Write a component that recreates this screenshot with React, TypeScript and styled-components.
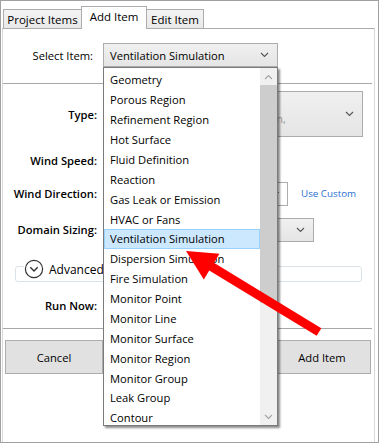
import styled, { createGlobalStyle } from "styled-components";

const GlobalStyle = createGlobalStyle`
  html, body { margin: 0; padding: 0; background: #fff; }
  body { font-family: "Open Sans", "Noto Sans", Arial, sans-serif; }
`;

const Frame = styled.div`
  position: relative;
  width: 379px;
  height: 443px;
  box-sizing: border-box;
  border: 1px solid #a0a0a0;
  background: #fff;
  display: flex;
  flex-direction: column;
  overflow: hidden;
  font-size: 11.2px;
  color: #000;
`;

const TabStrip = styled.div`
  display: flex;
  align-items: flex-end;
  height: 27px;
  padding-left: 2px;
  position: relative;
  z-index: 2;
`;

const Tab = styled.div<{ $active?: boolean; $w: number }>`
  box-sizing: border-box;
  width: ${(p) => p.$w}px;
  height: ${(p) => (p.$active ? 23 : 19)}px;
  margin-bottom: ${(p) => (p.$active ? -1 : 0)}px;
  border: 1px solid #acacac;
  border-bottom: none;
  margin-right: -1px;
  background: ${(p) => (p.$active ? "#fff" : "linear-gradient(#f3f3f3, #e9e9e9)")};
  display: flex;
  align-items: center;
  justify-content: center;
  font-size: 11.5px;
  padding-bottom: ${(p) => (p.$active ? 3 : 0)}px;
  position: relative;
  z-index: ${(p) => (p.$active ? 2 : 1)};
`;

const Panel = styled.div`
  flex: 1;
  margin-left: 1px;
  width: 373px;
  box-sizing: border-box;
  border: 1px solid #d9d9d9;
  border-top-color: #acacac;
  border-bottom: none;
  display: flex;
  flex-direction: column;
`;

const Row = styled.div<{ $h: number; $mt: number }>`
  display: flex;
  align-items: center;
  height: ${(p) => p.$h}px;
  margin-top: ${(p) => p.$mt}px;
`;

const Label = styled.div<{ $bold?: boolean }>`
  width: 94px;
  box-sizing: border-box;
  text-align: right;
  padding-right: ${(p) => (p.$bold ? 0 : 4)}px;
  font-weight: ${(p) => (p.$bold ? 600 : 400)};
  margin-right: 6px;
  white-space: nowrap;
`;

const Combo = styled.div<{ $w: number; $h?: number; $plain?: boolean }>`
  box-sizing: border-box;
  width: ${(p) => p.$w}px;
  height: ${(p) => p.$h ?? 24}px;
  border: 1px solid #acacac;
  background: ${(p) => (p.$plain ? "#fff" : "linear-gradient(#f0f0f0, #e5e5e5)")};
  display: flex;
  align-items: center;
  justify-content: space-between;
  padding: 0 8px 0 6px;
`;

const Hint = styled.span`
  width: 176px;
  text-align: right;
  color: #9a9a9a;
  margin-top: 8px;
`;

const LinkText = styled.span`
  color: #2c6fd1;
  font-size: 9.8px;
  margin-left: 13px;
`;

const Separator = styled.div<{ $mt: number }>`
  height: 1px;
  background: #a7a7a7;
  margin: ${(p) => p.$mt}px 2px 0 0;
`;

const Expander = styled.div`
  box-sizing: border-box;
  height: 16px;
  margin: 24px 12px 0 12px;
  border: 1px solid #dce3e8;
  border-radius: 3px;
`;

const ExpanderHeader = styled.div`
  display: inline-flex;
  align-items: center;
  gap: 5px;
  margin: -12px 0 0 8px;
  padding-right: 4px;
  background: #fff;
  font-size: 12px;
`;

const ButtonRow = styled.div`
  display: flex;
  justify-content: space-between;
  margin-top: 11px;
  padding: 0 3px 0 2px;
`;

const Button = styled.div`
  box-sizing: border-box;
  width: 98px;
  height: 34px;
  border: 1px solid #adadad;
  background: #e1e1e1;
  display: flex;
  align-items: center;
  justify-content: center;
`;

const DropList = styled.div`
  position: absolute;
  left: 102px;
  top: 66px;
  width: 175px;
  height: 359px;
  box-sizing: border-box;
  border: 1px solid #7a7a7a;
  background: #fff;
  box-shadow: 2px 2px 2px rgba(0, 0, 0, 0.45);
  display: flex;
  z-index: 5;
`;

const Items = styled.div`
  flex: 1;
  padding: 2px 0 0 0;
  overflow: hidden;
`;

const Item = styled.div<{ $selected?: boolean }>`
  box-sizing: border-box;
  height: 19.88px;
  display: flex;
  align-items: center;
  padding-left: 5px;
  border: 1px solid ${(p) => (p.$selected ? "#99d1ff" : "transparent")};
  background: ${(p) => (p.$selected ? "#cce8ff" : "transparent")};
  white-space: nowrap;
`;

const ScrollBar = styled.div`
  width: 17px;
  background: #f0f0f0;
  display: flex;
  flex-direction: column;
`;

const ScrollButton = styled.div`
  height: 17px;
  display: flex;
  align-items: center;
  justify-content: center;
`;

const Thumb = styled.div`
  height: 218px;
  background: #cdcdcd;
`;

const Spacer = styled.div`
  flex: 1;
`;

const Overlay = styled.svg`
  position: absolute;
  left: 0;
  top: 0;
  z-index: 10;
  pointer-events: none;
`;

const Chevron = ({ up, color = "#333" }: { up?: boolean; color?: string }) => (
  <svg width="9" height="6" viewBox="0 0 9 6">
    <polyline
      points={up ? "1,5 4.5,1.5 8,5" : "1,1 4.5,4.5 8,1"}
      fill="none"
      stroke={color}
      strokeWidth="1.1"
    />
  </svg>
);

const items = [
  "Geometry",
  "Porous Region",
  "Refinement Region",
  "Hot Surface",
  "Fluid Definition",
  "Reaction",
  "Gas Leak or Emission",
  "HVAC or Fans",
  "Ventilation Simulation",
  "Dispersion Simulation",
  "Fire Simulation",
  "Monitor Point",
  "Monitor Line",
  "Monitor Surface",
  "Monitor Region",
  "Monitor Group",
  "Leak Group",
  "Contour",
];

// red annotation arrow
const tip = { x: 185, y: 250 };
const tail = { x: 318, y: 331 };
const dx = tip.x - tail.x;
const dy = tip.y - tail.y;
const len = Math.hypot(dx, dy);
const ux = dx / len;
const uy = dy / len;
const headLen = 30;
const headHalf = 15;
const bx = tip.x - ux * headLen;
const by = tip.y - uy * headLen;
const headPts = `${tip.x},${tip.y} ${bx - uy * headHalf},${by + ux * headHalf} ${bx + uy * headHalf},${by - ux * headHalf}`;

export default function App() {
  return (
    <>
      <GlobalStyle />
      <Frame>
        <TabStrip>
          <Tab $w={79}>Project Items</Tab>
          <Tab $w={66} $active>Add Item</Tab>
          <Tab $w={58}>Edit Item</Tab>
        </TabStrip>
        <Panel>
          <Row $h={24} $mt={14}>
            <Label>Select Item:</Label>
            <Combo $w={175}>
              <span>Ventilation Simulation</span>
              <Chevron color="#555" />
            </Combo>
          </Row>
          <Separator $mt={16} />

          <Row $h={46} $mt={7}>
            <Label $bold>Type:</Label>
            <Combo $w={260} $h={46}>
              <Hint>Natural ventilation,</Hint>
              <Chevron color="#555" />
            </Combo>
          </Row>
          <Row $h={28} $mt={9}>
            <Label $bold>Wind Speed:</Label>
          </Row>
          <Row $h={25} $mt={7}>
            <Label $bold>Wind Direction:</Label>
            <Combo $w={185} $plain>
              <span />
              <svg width="7" height="4" viewBox="0 0 7 4">
                <polygon points="0,0 7,0 3.5,4" fill="#111" />
              </svg>
            </Combo>
            <LinkText>Use Custom</LinkText>
          </Row>
          <Row $h={25} $mt={11}>
            <Label $bold>Domain Sizing:</Label>
            <Combo $w={211}>
              <span />
              <Chevron color="#555" />
            </Combo>
          </Row>

          <Expander>
            <ExpanderHeader>
              <svg width="20" height="20" viewBox="0 0 20 20">
                <circle cx="10" cy="10" r="8.6" fill="none" stroke="#333" strokeWidth="1.2" />
                <polyline points="6.3,8.2 10,11.9 13.7,8.2" fill="none" stroke="#333" strokeWidth="1.4" />
              </svg>
              Advanced
            </ExpanderHeader>
          </Expander>

          <Row $h={24} $mt={11}>
            <Label $bold>Run Now:</Label>
          </Row>
          <Separator $mt={11} />
          <ButtonRow>
            <Button>Cancel</Button>
            <Button>Add Item</Button>
          </ButtonRow>
        </Panel>

        <DropList>
          <Items>
            {items.map((name) => (
              <Item key={name} $selected={name === "Ventilation Simulation"}>
                {name}
              </Item>
            ))}
          </Items>
          <ScrollBar>
            <ScrollButton>
              <Chevron up color="#a3a3a3" />
            </ScrollButton>
            <Thumb />
            <Spacer />
            <ScrollButton>
              <Chevron color="#a3a3a3" />
            </ScrollButton>
          </ScrollBar>
        </DropList>

        <Overlay width="379" height="443" viewBox="0 0 379 443">
          <line
            x1={tail.x}
            y1={tail.y}
            x2={bx + ux * 2}
            y2={by + uy * 2}
            stroke="#f00"
            strokeWidth="9"
          />
          <polygon points={headPts} fill="#f00" />
        </Overlay>
      </Frame>
    </>
  );
}
